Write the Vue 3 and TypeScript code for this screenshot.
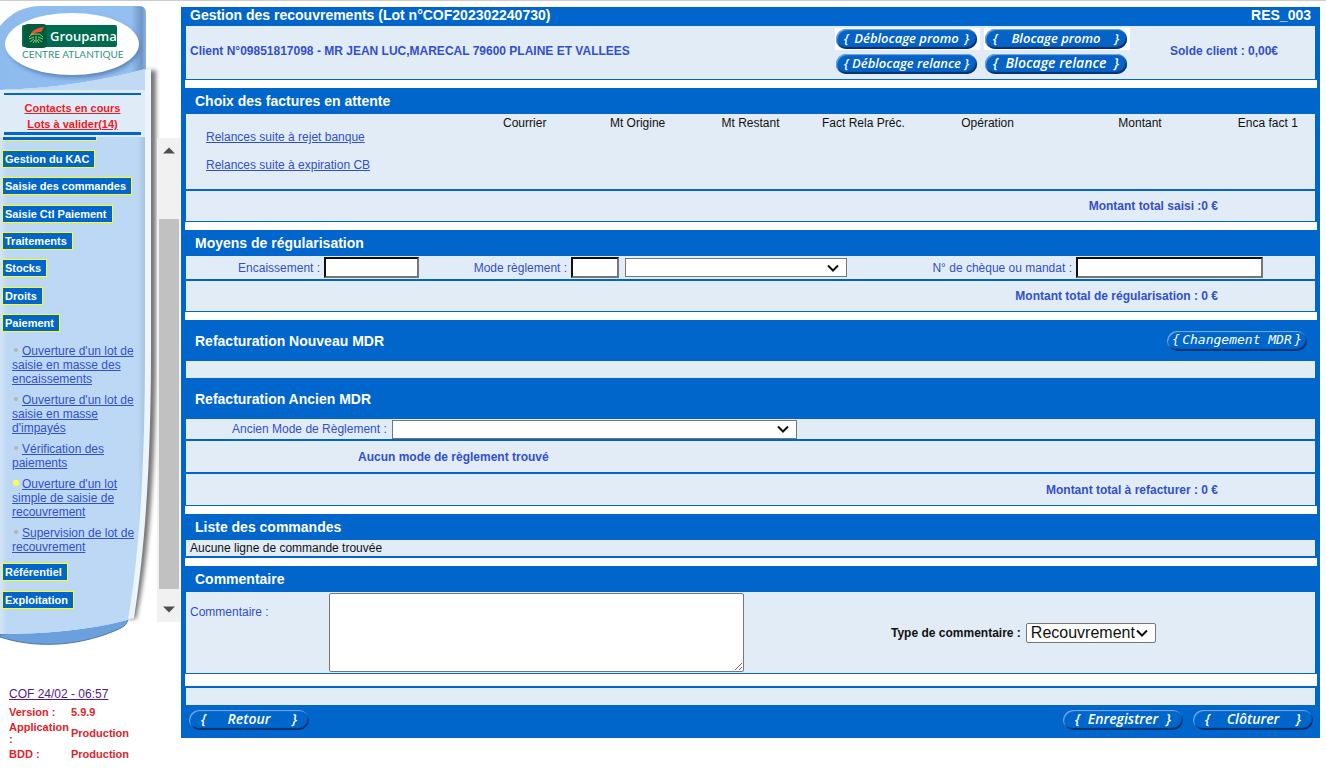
<script setup lang="ts">
import { ref } from 'vue'

interface SubLink {
  label: string
  active?: boolean
}

const menu: string[] = [
  'Gestion du KAC',
  'Saisie des commandes',
  'Saisie Ctl Paiement',
  'Traitements',
  'Stocks',
  'Droits',
  'Paiement',
]

const subLinks: SubLink[] = [
  { label: "Ouverture d'un lot de saisie en masse des encaissements" },
  { label: "Ouverture d'un lot de saisie en masse d'impayés" },
  { label: 'Vérification des paiements' },
  { label: "Ouverture d'un lot simple de saisie de recouvrement", active: true },
  { label: 'Supervision de lot de recouvrement' },
]

const menuEnd: string[] = ['Référentiel', 'Exploitation']

const columns: string[] = [
  'Courrier',
  'Mt Origine',
  'Mt Restant',
  'Fact Rela Préc.',
  'Opération',
  'Montant',
  'Enca fact 1',
]

const encaissement = ref('')
const modeCode = ref('')
const mode = ref('')
const cheque = ref('')
const ancienMode = ref('')
const commentaire = ref('')
const typeCommentaire = ref('Recouvrement')
</script>

<template>
  <div class="page">
    <aside class="sidebar">
      <svg class="art" width="180" height="660" viewBox="0 0 180 660" aria-hidden="true">
        <defs>
          <linearGradient id="topFill" x1="0" x2="1" y1="0" y2="0">
            <stop offset="0" stop-color="#8dbbee" />
            <stop offset="0.9" stop-color="#93bff1" />
            <stop offset="0.97" stop-color="#7096c6" />
            <stop offset="1" stop-color="#8db2dd" />
          </linearGradient>
          <linearGradient id="bodyFill" x1="0" x2="1" y1="0" y2="0">
            <stop offset="0" stop-color="#d3e5f8" />
            <stop offset="0.05" stop-color="#bdd8f4" />
            <stop offset="0.95" stop-color="#bdd8f4" />
            <stop offset="1" stop-color="#a9c4e2" />
          </linearGradient>
          <filter id="soft" x="-20%" y="-20%" width="140%" height="140%">
            <feGaussianBlur stdDeviation="2" />
          </filter>
          <filter id="softer" x="-20%" y="-5%" width="140%" height="110%">
            <feGaussianBlur stdDeviation="2" />
          </filter>
        </defs>
        <path d="M130 72L156 70V350C156 460 149 560 136 619L100 616Z" fill="#777" filter="url(#softer)" />
        <path d="M0 26C12 12 24 6 42 6H139Q146 6 146 13V95H0Z" fill="url(#topFill)" />
        <ellipse cx="74" cy="47" rx="66" ry="31" fill="#4a6ea0" opacity="0.7" filter="url(#soft)" />
        <ellipse cx="72" cy="44" rx="67" ry="31" fill="#fff" />
        <path d="M0 634C50 632 95 628 128 618Q128 624 121 628C85 645 40 650 0 637Z" fill="#6ba0dc" stroke="#4a78ae" />
        <path d="M0 90C60 88 105 80 151 68V350C151 460 145 550 134 618L126 620C90 630 45 634 0 634Z" fill="#edf4fc" />
        <path d="M0 90C60 88 105 80 145 69V350C145 460 140 550 128 620C90 630 45 634 0 634Z" fill="url(#bodyFill)" />
        <path d="M0 90C60 88 105 80 145 69V90Z" fill="#c2d9f3" />
        <path d="M0 90H145V137H0Z" fill="#e0ebf8" />
        <rect x="22" y="25" width="95" height="22" rx="2" fill="#006b4f" />
        <rect x="24" y="24" width="23" height="24" rx="4" fill="#005c3e" />
        <path d="M30 35C33 29 38 28 44 27L41 32C38 32 35 32 33 35Z" fill="#f0522d" />
        <path d="M29 37Q32 33 36 34Q40 33 43 37M29 39L34 37M43 39L38 37M30 42L34 39M42 42L38 39M36 36V43M33 43L35 40M39 43L37 40" fill="none" stroke="#8fd069" stroke-width="1" />
        <text x="50" y="41" class="brand">Groupama</text>
        <text x="22" y="58" class="region">CENTRE ATLANTIQUE</text>
      </svg>

      <div class="brand-space"></div>
      <nav class="contacts">
        <a href="#">Contacts en cours</a>
        <a href="#">Lots à valider(14)</a>
      </nav>

      <div class="menu-zone">
        <nav class="menu">
          <div class="cut-item"></div>
          <ul class="main-items">
            <li v-for="item in menu" :key="item"><a href="#" class="item">{{ item }}</a></li>
          </ul>
          <ul class="sub-items">
            <li v-for="link in subLinks" :key="link.label">
              <span class="dot" :class="{ active: link.active }"></span><a href="#">{{ link.label }}</a>
            </li>
          </ul>
          <ul class="end-items">
            <li v-for="item in menuEnd" :key="item"><a href="#" class="item">{{ item }}</a></li>
          </ul>
        </nav>
        <div class="scrollbar">
          <svg width="12" height="7" viewBox="0 0 12 7"><path d="M0 6.500L6 0.500L12 6.500Z" fill="#505050" /></svg>
          <div class="thumb"></div>
          <svg width="12" height="7" viewBox="0 0 12 7"><path d="M0 0.500L6 6.500L12 0.500Z" fill="#505050" /></svg>
        </div>
      </div>

      <div class="session">
        <a href="#">COF 24/02 - 06:57</a>
        <dl>
          <dt>Version :</dt><dd>5.9.9</dd>
          <dt>Application :</dt><dd>Production</dd>
          <dt>BDD :</dt><dd>Production</dd>
        </dl>
      </div>
    </aside>

    <main class="panel">
      <header class="title-bar">
        <h1>Gestion des recouvrements (Lot n°COF202302240730)</h1>
        <span>RES_003</span>
      </header>
      <section class="row client">
        <strong class="client-name">Client N°09851817098 - MR JEAN LUC,MARECAL 79600 PLAINE ET VALLEES</strong>
        <div class="client-actions">
          <div class="slot plate"><button type="button" class="pill"><i>{</i><span>Déblocage promo</span><i>}</i></button></div>
          <div class="slot plate"><button type="button" class="pill"><i>{</i><span>Blocage promo</span><i>}</i></button></div>
          <div class="slot"><button type="button" class="pill"><i>{</i><span>Déblocage relance</span><i>}</i></button></div>
          <div class="slot"><button type="button" class="pill big"><i>{</i><span>Blocage relance</span><i>}</i></button></div>
        </div>
        <strong class="balance">Solde client : 0,00€</strong>
      </section>
      <div class="gap"></div>

      <h2>Choix des factures en attente</h2>
      <div class="row invoices">
        <table>
          <colgroup>
            <col class="w25" /><col class="w10" /><col class="w10" /><col class="w10" /><col class="w10" />
            <col class="w12" /><col class="w15" /><col class="w8" />
          </colgroup>
          <tbody>
            <tr>
              <td class="links">
                <a href="#">Relances suite à rejet banque</a>
                <a href="#">Relances suite à expiration CB</a>
              </td>
              <th v-for="c in columns" :key="c" scope="col">{{ c }}</th>
            </tr>
          </tbody>
        </table>
      </div>
      <div class="row total ruled">Montant total saisi :0 €</div>
      <div class="gap"></div>

      <h2>Moyens de régularisation</h2>
      <div class="row payment">
        <div class="field end1">
          <label for="enc">Encaissement :</label>
          <input id="enc" v-model="encaissement" type="text" class="w-enc" />
        </div>
        <div class="field end2">
          <label for="modeCode">Mode règlement :</label>
          <input id="modeCode" v-model="modeCode" type="text" class="w-code" />
          <select v-model="mode" class="w-mode" aria-label="Mode règlement"><option value=""></option></select>
        </div>
        <div class="field end3">
          <label for="cheque">N° de chèque ou mandat :</label>
          <input id="cheque" v-model="cheque" type="text" class="w-cheque" />
        </div>
      </div>
      <div class="row total ruled">Montant total de régularisation : 0 €</div>
      <div class="gap"></div>

      <div class="tall-head">
        <h2>Refacturation Nouveau MDR</h2>
        <button type="button" class="pill flat mono"><i>{</i><span>Changement MDR</span><i>}</i></button>
      </div>
      <div class="row blank"></div>
      <div class="tall-head"><h2>Refacturation Ancien MDR</h2></div>
      <div class="row old-mode">
        <label for="ancien">Ancien Mode de Règlement :</label>
        <select id="ancien" v-model="ancienMode" class="w-ancien"><option value=""></option></select>
      </div>
      <div class="row notice ruled">Aucun mode de règlement trouvé</div>
      <div class="row total tall ruled">Montant total à refacturer : 0 €</div>
      <div class="gap"></div>

      <h2>Liste des commandes</h2>
      <div class="row orders">Aucune ligne de commande trouvée</div>
      <div class="gap ruled"></div>

      <h2>Commentaire</h2>
      <div class="row comment">
        <label for="comm" class="comment-label">Commentaire :</label>
        <textarea id="comm" v-model="commentaire"></textarea>
        <div class="comment-type">
          <label for="type">Type de commentaire :</label>
          <select id="type" v-model="typeCommentaire"><option>Recouvrement</option></select>
        </div>
      </div>
      <div class="gap large"></div>
      <div class="row blank ruled"></div>

      <footer class="actions">
        <button type="button" class="pill flat big back"><i>{</i><span>Retour</span><i>}</i></button>
        <button type="button" class="pill flat big"><i>{</i><span>Enregistrer</span><i>}</i></button>
        <button type="button" class="pill flat big"><i>{</i><span>Clôturer</span><i>}</i></button>
      </footer>
    </main>
  </div>
</template>

<style>
body {
  margin: 0;
  background: #fff;
}
</style>

<style scoped>
* {
  box-sizing: border-box;
}

.page {
  display: flex;
  align-items: flex-start;
  border-top: 1px solid #ccc;
  font-family: "Liberation Sans", Arial, sans-serif;
  font-size: 12px;
  line-height: 14px;
  color: #3350cc;
}

a {
  color: #3350cc;
}

ul,
dl,
dd {
  margin: 0;
  padding: 0;
  list-style: none;
}

/* Sidebar */
.sidebar {
  position: relative;
  flex: 0 0 181px;
}

.art {
  position: absolute;
  top: -1px;
  left: 0;
  z-index: -1;
}

.brand {
  font: 600 13px "Open Sans", sans-serif;
  fill: #fff;
}

.region {
  font: 400 10px Lato, sans-serif;
  fill: #2f9480;
}

.brand-space {
  height: 92px;
}

.contacts {
  display: flex;
  flex-direction: column;
  align-items: center;
  width: 137px;
  height: 42px;
  margin-left: 4px;
  padding-top: 5px;
  border-top: 2px solid #0066cc;
  border-bottom: 3px solid #0066cc;
}

.contacts a {
  font-size: 11px;
  font-weight: bold;
  line-height: 16px;
  color: #ed1c24;
}

.menu-zone {
  display: flex;
  justify-content: space-between;
  margin-top: 2px;
}

.menu {
  width: 144px;
  padding-left: 2px;
}

.cut-item {
  width: 95px;
  height: 4px;
  background: #0066cc;
  border: solid #f5f53a;
  border-width: 0 1px 1px;
}

.main-items,
.end-items {
  display: flex;
  flex-direction: column;
  justify-content: space-between;
}

.main-items {
  height: 182px;
  margin-top: 9px;
}

.end-items {
  height: 46px;
  margin-top: 9px;
}

.item {
  display: inline-block;
  height: 18px;
  padding: 0 5px 0 2px;
  border: 1px solid #ffff00;
  background: #0066cc;
  color: #fff;
  font-size: 11px;
  font-weight: bold;
  line-height: 16px;
  text-decoration: none;
  vertical-align: top;
}

.sub-items {
  display: flex;
  flex-direction: column;
  gap: 7px;
  width: 138px;
  margin-top: 12px;
  padding-left: 10px;
}

.dot {
  display: inline-block;
  width: 4px;
  height: 4px;
  margin: 0 4px 4px 2px;
  border-radius: 50%;
  background: #b9b3ad;
  vertical-align: middle;
}

.dot.active {
  width: 6px;
  height: 6px;
  margin: 0 3px 4px 1px;
  background: #ffff4d;
}

.scrollbar {
  display: flex;
  flex-direction: column;
  align-items: center;
  justify-content: space-between;
  width: 23px;
  height: 484px;
  margin-right: 1px;
  margin-top: 1px;
  padding: 9px 0;
  background: #f1f1f1;
}

.thumb {
  width: 20px;
  height: 370px;
  margin-top: 47px;
  background: #c1c1c1;
}

.session {
  margin: 65px 0 0 9px;
}

.session > a {
  color: #551a8b;
}

.session dl {
  display: grid;
  grid-template-columns: 58px 1fr;
  column-gap: 4px;
  row-gap: 3px;
  align-items: center;
  margin-top: 5px;
  color: #e0232a;
  font-size: 11px;
  font-weight: bold;
  line-height: 12px;
}

/* Main panel */
.panel {
  flex: 1;
  min-width: 0;
  margin: 6px 6px 0 0;
  padding: 0 3px 0 4px;
  background: #0066cc;
}

.title-bar {
  display: flex;
  justify-content: space-between;
  height: 19px;
  padding: 0 6px 0 5px;
  color: #fff;
  font-size: 14px;
  font-weight: bold;
  line-height: 17px;
}

h1,
h2 {
  margin: 0;
  color: #fff;
  font-size: 14px;
  font-weight: bold;
}

h1 {
  line-height: 17px;
}

h2 {
  padding-left: 10px;
  line-height: 26px;
}

.row {
  display: flex;
  align-items: center;
  margin: 0 2px 0 1px;
  background: #e1ecf7;
}

.gap {
  height: 8px;
  margin-top: 1px;
  background: #fff;
}

.gap.large {
  height: 12px;
}

.ruled {
  margin-top: 2px;
}

.client {
  height: 53px;
  padding: 0 0 3px 4px;
}

.client-name {
  flex: 1;
}

.client-actions {
  display: grid;
  grid-template-columns: 145px 146px;
  gap: 3px 4px;
}

.slot {
  padding: 1px 3px 1px 1px;
}

.plate {
  background: #fff;
}

.balance {
  width: 145px;
  margin-left: 40px;
}

.pill {
  display: flex;
  align-items: center;
  justify-content: space-between;
  width: 100%;
  height: 20px;
  padding: 0 8px 1px;
  border: 0;
  border-radius: 10px;
  background: #0562c6;
  box-shadow: inset 1px 1px 1px #79aee6, inset -1px -2px 1px #08326c;
  color: #fff;
  font: italic 600 13px/18px "Open Sans", sans-serif;
  white-space: nowrap;
}

.pill.big {
  font-size: 14px;
}

.pill.flat {
  background: #0066cc;
}

.pill.mono {
  width: 140px;
  padding: 0 5px 1px;
  font: italic 13px/18px "DejaVu Sans Mono", monospace;
}

.invoices {
  height: 75px;
  align-items: flex-start;
}

table {
  width: 100%;
  table-layout: fixed;
  border-collapse: collapse;
  color: #111;
}

.w25 { width: 25%; }
.w10 { width: 10%; }
.w12 { width: 12%; }
.w15 { width: 15%; }
.w8 { width: 8%; }

th {
  padding: 2px 0 0;
  font-weight: normal;
  text-align: center;
  vertical-align: top;
}

th:last-child {
  padding-right: 4px;
}

td {
  padding: 0;
}

.links a {
  display: block;
  width: max-content;
  margin: 16px 0 0 20px;
}

.links a + a {
  margin-top: 14px;
}

.total {
  justify-content: flex-end;
  height: 30px;
  padding-right: 97px;
  font-weight: bold;
}

.total.tall {
  height: 31px;
}

.payment {
  display: grid;
  grid-template-columns: 21% 38% 41%;
  height: 23px;
}

.field {
  display: flex;
  align-items: center;
  justify-content: flex-end;
  gap: 4px;
}

.end1 { padding-right: 4px; }
.end2 { padding-right: 5px; }
.end3 { padding-right: 52px; }

input {
  height: 21px;
  border: 2px solid;
  border-color: #111 #767676 #767676 #111;
  background: #fff;
  padding: 0 2px;
}

select {
  height: 19px;
  padding: 0 20px 0 4px;
  border: 1px solid #767676;
  border-radius: 0;
  appearance: none;
  background: #fff url("data:image/svg+xml,%3Csvg xmlns='http://www.w3.org/2000/svg' width='12' height='8'%3E%3Cpath d='M1 1.500L6 6.500L11 1.500' fill='none' stroke='%23111' stroke-width='2'/%3E%3C/svg%3E") no-repeat right 7px center;
  color: #111;
  font-family: inherit;
}

.w-enc { width: 95px; }
.w-code { width: 48px; }
.w-mode { width: 222px; margin-left: 2px; }
.w-cheque { width: 187px; }
.w-ancien { width: 405px; }

.tall-head {
  display: flex;
  align-items: center;
  justify-content: space-between;
  height: 41px;
  padding-right: 10px;
}

.blank {
  height: 17px;
}

.old-mode {
  height: 20px;
  gap: 5px;
  padding-left: 46px;
}

.notice {
  height: 31px;
  padding-left: 172px;
  font-weight: bold;
}

.orders {
  height: 16px;
  padding-left: 4px;
  color: #111;
}

.comment {
  align-items: stretch;
  height: 81px;
  padding: 1px 0 1px 4px;
}

.comment-label {
  width: 139px;
  padding-top: 12px;
}

textarea {
  width: 415px;
  margin: 0;
  border: 1px solid #767676;
  border-radius: 2px;
  resize: both;
}

.comment-type {
  display: flex;
  align-items: center;
  gap: 5px;
  margin-left: 147px;
  color: #111;
  font-weight: bold;
}

.comment-type select {
  width: 130px;
  height: 20px;
  border-radius: 2px;
  font-size: 16px;
  line-height: 18px;
}

.actions {
  display: flex;
  align-items: center;
  gap: 10px;
  height: 33px;
  padding: 0 4px 4px;
}

.back {
  margin-right: auto;
}

.actions .pill {
  width: 120px;
  padding: 0 12px 1px;
}
</style>
